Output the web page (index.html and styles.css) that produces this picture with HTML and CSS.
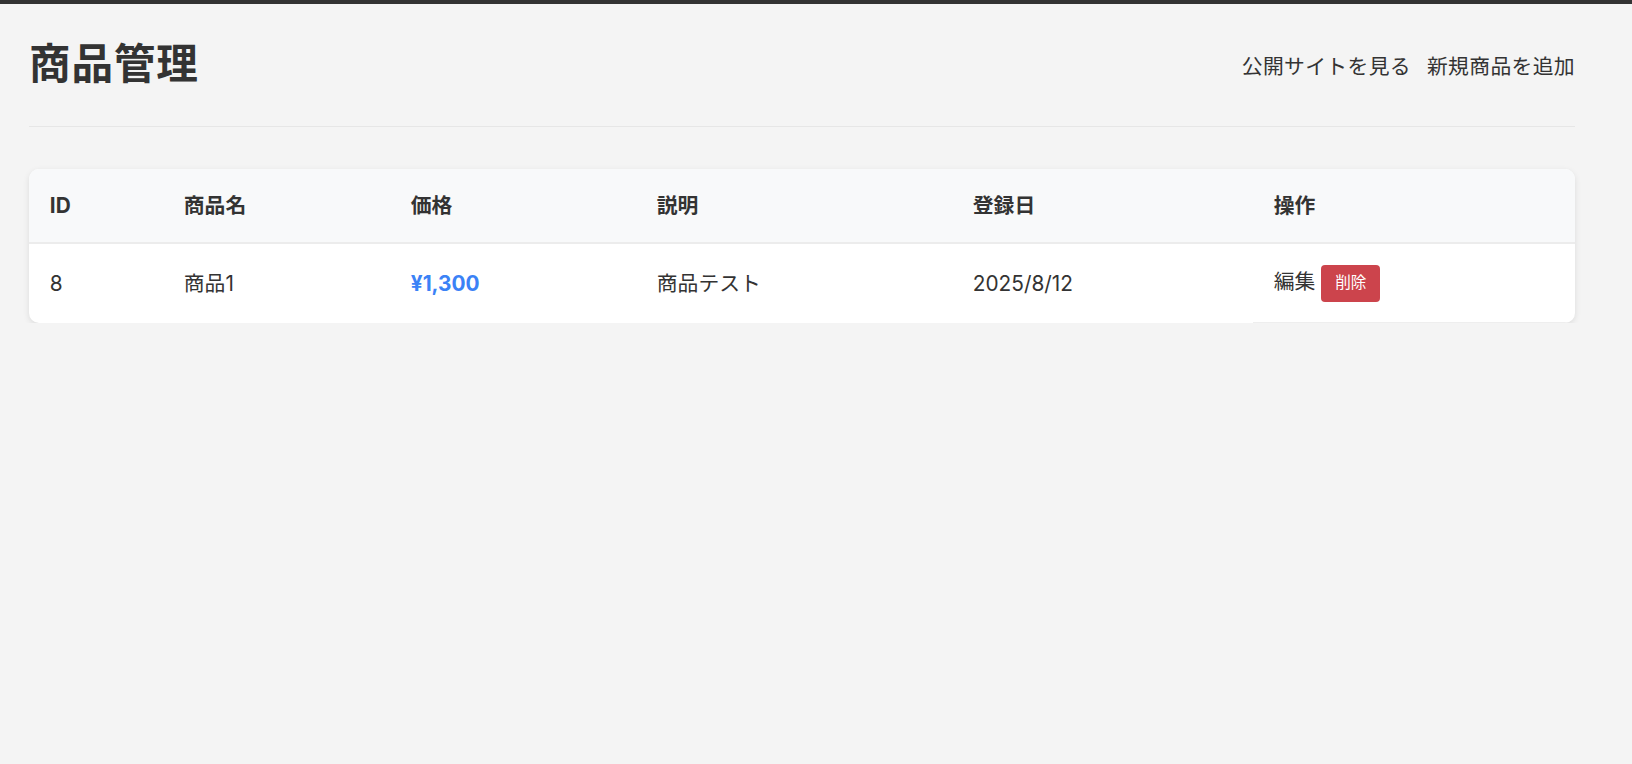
FILE: index.html
```html
<!DOCTYPE html>
<html lang="ja">
<head>
  <meta charset="utf-8" />
  <link rel="stylesheet" href="styles.css">
  <title>商品管理</title>
</head>
<body>
  <div class="container">
    <header class="page-header">
      <h1>商品管理</h1>
      <nav class="nav">
        <a href="#">公開サイトを見る</a>
        <a href="#">新規商品を追加</a>
      </nav>
    </header>

    <div class="card">
      <table class="products">
        <colgroup>
          <col class="col-id">
          <col class="col-name">
          <col class="col-price">
          <col class="col-desc">
          <col class="col-date">
          <col class="col-actions">
        </colgroup>
        <thead>
          <tr>
            <th>ID</th>
            <th>商品名</th>
            <th>価格</th>
            <th>説明</th>
            <th>登録日</th>
            <th>操作</th>
          </tr>
        </thead>
        <tbody>
          <tr>
            <td>8</td>
            <td>商品1</td>
            <td class="price">¥1,300</td>
            <td>商品テスト</td>
            <td>2025/8/12</td>
            <td class="actions">
              <a href="#" class="edit">編集</a>
              <button class="delete">削除</button>
            </td>
          </tr>
        </tbody>
      </table>
    </div>
  </div>
</body>
</html>
```

FILE: styles.css
```css
body {
  margin: 0;
  background: #f4f4f4;
  border-top: 4px solid #333;
  color: #333;
  font-family: "Inter", "Noto Sans CJK JP", sans-serif;
}
.container {
  width: 1546px;
  margin-left: 29px;
}
.page-header {
  display: flex;
  justify-content: space-between;
  align-items: center;
  height: 122px;
  border-bottom: 1px solid #e6e6e6;
}
h1 {
  margin: 0;
  font-size: 41.6px;
  font-weight: 700;
  line-height: 1.2;
  letter-spacing: 0.8px;
}
.nav {
  display: flex;
  gap: 16px;
}
.nav a {
  color: #333;
  text-decoration: none;
  font-size: 20.8px;
  letter-spacing: 0.35px;
}
.card {
  margin-top: 42px;
  background: white;
  border-radius: 10px;
  overflow: hidden;
  box-shadow: 0 2px 6px rgba(0,0,0,0.1);
}
.products {
  width: 100%;
  border-collapse: collapse;
  table-layout: fixed;
}
.col-id { width: 134px; }
.col-name { width: 227px; }
.col-price { width: 246px; }
.col-desc { width: 316px; }
.col-date { width: 301px; }
th, td {
  text-align: left;
  padding: 20.8px;
  font-size: 20.8px;
  line-height: 1.5;
}
th {
  background: #f8f9fa;
  font-weight: 700;
  border-bottom: 2px solid #ececec;
}
td {
  color: #333;
}
.price {
  color: #3b82f6;
  font-weight: 700;
}
.actions {
  border-bottom: 1px solid #eee;
}
.edit {
  color: #333;
  text-decoration: none;
}
.delete {
  background: #cc444c;
  color: white;
  border: none;
  border-radius: 4px;
  padding: 6.8px 13.9px;
  font-family: "Inter", "Noto Sans CJK JP", sans-serif;
  font-size: 15.6px;
  line-height: 1.5;
  vertical-align: middle;
  cursor: pointer;
}
```
